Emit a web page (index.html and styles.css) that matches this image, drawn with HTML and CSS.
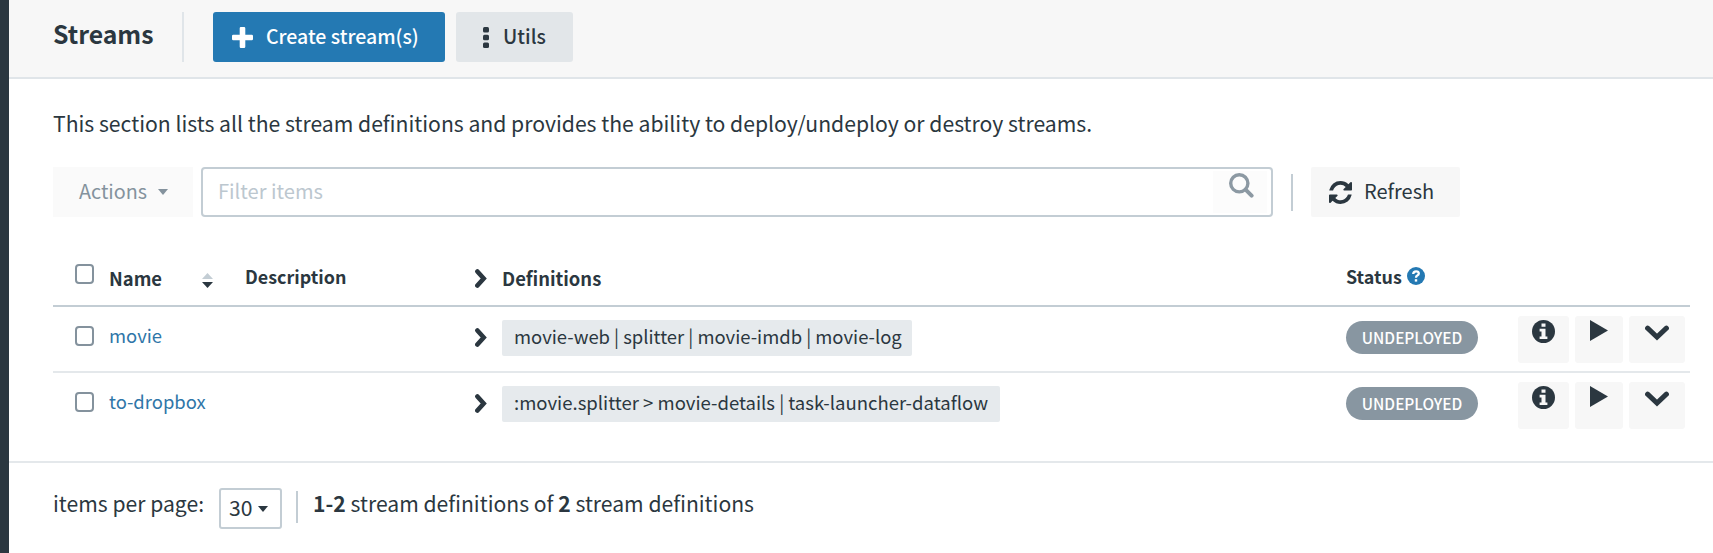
FILE: index.html
```html
<!DOCTYPE html>
<html lang="en">
<head>
<meta charset="utf-8">
<title>Streams</title>
<link rel="stylesheet" href="styles.css">
</head>
<body>
<svg class="defs" width="0" height="0">
  <symbol id="chevron" viewBox="0 0 12 19"><path d="M2.4 2.5 8.700 9.500 2.400 16.500" fill="none" stroke="currentColor" stroke-width="4.600" stroke-linecap="round"/></symbol>
  <symbol id="down" viewBox="0 0 24 16"><path d="M2.600 3.200 12 12 21.400 3.200" fill="none" stroke="currentColor" stroke-width="5" stroke-linecap="round"/></symbol>
  <symbol id="play" viewBox="0 0 18 21"><path d="M0 0 18 10.5 0 21Z" fill="currentColor"/></symbol>
  <symbol id="info" viewBox="0 0 23 23"><circle cx="11.5" cy="11.5" r="11.5" fill="currentColor"/><path d="M9.5 3.4h4v3.4h-4zM7.6 8.8h5.9v7.6h1.9v2.6H7.6v-2.6h1.9v-5H7.6z" fill="#f7f7f7"/></symbol>
</svg>
<div class="app">
  <aside class="rail"></aside>
  <main class="main">
    <header class="header">
      <h1 class="title">Streams</h1>
      <button class="btn primary"><svg width="21" height="21" viewBox="0 0 21 21"><path d="M7.7 1.2q0-1.2 1.2-1.2h3.2q1.2 0 1.2 1.2v6.5h6.5q1.2 0 1.2 1.2v3.2q0 1.2-1.2 1.2h-6.5v6.5q0 1.2-1.2 1.2H8.900q-1.200 0-1.200-1.200v-6.500H1.200Q0 13.300 0 12.100V8.900q0-1.200 1.200-1.200h6.500z" fill="#fff"/></svg><span class="label">Create stream(s)</span></button>
      <button class="btn utils"><svg width="6" height="21" viewBox="0 0 6 21"><g fill="#2b3740"><rect width="6" height="5.500" rx="1.500"/><rect y="7.700" width="6" height="5.500" rx="1.500"/><rect y="15.400" width="6" height="5.500" rx="1.500"/></g></svg><span class="label">Utils</span></button>
    </header>
    <section class="content">
      <p class="intro">This section lists all the stream definitions and provides the ability to deploy/undeploy or destroy streams.</p>
      <div class="toolbar">
        <button class="actions"><span class="label">Actions</span><i class="caret"></i></button>
        <div class="search"><span class="label">Filter items</span><span class="search-btn"><svg width="25" height="25" viewBox="0 0 25 25"><circle cx="10.300" cy="10.300" r="8.600" fill="none" stroke="#8c99a3" stroke-width="3.400"/><path d="m16.600 16.600 6 6" stroke="#8c99a3" stroke-width="4" stroke-linecap="round"/></svg></span></div>
        <i class="rule"></i>
        <button class="refresh"><svg width="23" height="23" viewBox="0 0 1536 1536"><path fill="#2b3740" d="M1511 928q0 5-1 7-64 268-268 434.500T764 1536q-146 0-282.500-55T238 1324l-129 129q-19 19-45 19t-45-19-19-45V960q0-26 19-45t45-19h448q26 0 45 19t19 45-19 45l-137 137q71 66 161 102t187 36q134 0 250-65t186-179q11-17 53-117 8-23 30-23h192q13 0 22.500 9.500t9.500 22.500zm25-800v448q0 26-19 45t-45 19h-448q-26 0-45-19t-19-45 19-45l138-138Q969 256 768 256q-134 0-250 65T332 500q-11 17-53 117-8 23-30 23H50q-13 0-22.500-9.500T18 608v-7q65-268 270-434.500T768 0q146 0 284 55.500T1297 212l130-129q19-19 45-19t45 19 19 45z"/></svg><span class="label">Refresh</span></button>
      </div>
      <div class="table">
        <div class="row head">
          <i class="check"></i>
          <span class="name">Name</span>
          <svg class="sort" width="11" height="15" viewBox="0 0 11 15"><path d="M0 6 5.500 0 11 6z" fill="#c3cdd4"/><path d="M0 9h11l-5.500 6z" fill="#2b3740"/></svg>
          <span class="desc">Description</span>
          <svg class="chev" width="12" height="19"><use href="#chevron"/></svg>
          <span class="defn">Definitions</span>
          <span class="status"><span>Status</span><svg width="18" height="18" viewBox="0 0 18 18"><circle cx="9" cy="9" r="9" fill="#2479b3"/><path d="M6.200 7Q6.300 4.300 9.100 4.300q2.700 0 2.700 2.200 0 1.300-1.500 2.100Q9 9.300 9 10.800" fill="none" stroke="#fff" stroke-width="2.300"/><path d="M7.800 12.200h2.400v2.400H7.800z" fill="#fff"/></svg></span>
        </div>
        <div class="row">
          <i class="check"></i>
          <a class="name">movie</a>
          <svg class="chev" width="12" height="19"><use href="#chevron"/></svg>
          <span class="defn"><span class="chip chip-a">movie-web | splitter | movie-imdb | movie-log</span></span>
          <span class="status"><span class="pill">UNDEPLOYED</span></span>
          <span class="tools"><button class="tool info"><svg width="23" height="23"><use href="#info"/></svg></button><button class="tool play"><svg width="18" height="21"><use href="#play"/></svg></button><button class="tool more"><svg width="24" height="16"><use href="#down"/></svg></button></span>
        </div>
        <div class="row last">
          <i class="check"></i>
          <a class="name">to-dropbox</a>
          <svg class="chev" width="12" height="19"><use href="#chevron"/></svg>
          <span class="defn"><span class="chip chip-b">:movie.splitter &gt; movie-details | task-launcher-dataflow</span></span>
          <span class="status"><span class="pill">UNDEPLOYED</span></span>
          <span class="tools"><button class="tool info"><svg width="23" height="23"><use href="#info"/></svg></button><button class="tool play"><svg width="18" height="21"><use href="#play"/></svg></button><button class="tool more"><svg width="24" height="16"><use href="#down"/></svg></button></span>
        </div>
      </div>
    </section>
    <footer class="footer">
      <span class="per">items per page:</span>
      <button class="size"><span class="label">30</span><i class="caret dark"></i></button>
      <i class="rule foot"></i>
      <span class="count"><b>1-2</b> stream definitions of <b>2</b> stream definitions</span>
    </footer>
  </main>
</div>
</body>
</html>
```

FILE: styles.css
```css
* { box-sizing: border-box; }
body {
  margin: 0;
  background: #fff;
  color: #2b3740;
  font: 20px/30px "Noto Sans CJK SC", "Noto Sans", sans-serif;
}
button {
  display: flex;
  align-items: center;
  padding: 0;
  border: 0;
  font: inherit;
  color: inherit;
}
svg, i { display: block; flex: none; }
span, a, b, p { white-space: nowrap; }
.defs { position: absolute; }
.label { padding-bottom: 2px; }
.app { display: flex; height: 553px; overflow: hidden; }
.rail { width: 9px; background: #2b3740; }
.main { flex: 1; display: flex; flex-direction: column; min-width: 0; }

.header {
  display: flex;
  height: 79px;
  padding: 12px 0 0 44px;
  background: #f7f7f7;
  border-bottom: 2px solid #e0e5e9;
}
.title {
  width: 131px;
  height: 50px;
  margin: 0 29px 0 0;
  padding-top: 6px;
  border-right: 2px solid #e0e5e9;
  font-size: 24.8px;
}
.btn { height: 50px; border-radius: 3px; font-size: 19.5px; font-weight: 500; }
.primary { width: 232px; padding-left: 19px; gap: 13px; background: #2479b3; color: #fff; }
.utils { width: 117px; margin-left: 11px; padding-left: 27px; gap: 14px; background: #e2e6e9; }

.content { height: 382px; padding: 29px 23px 0 44px; }
.intro { margin: 0; font-size: 21.17px; }
.toolbar { display: flex; height: 50px; margin-top: 29px; }
.actions { width: 140px; padding-left: 26px; gap: 11px; background: #fafafa; color: #84929d; font-size: 19.8px; }
.caret { border: 5px solid transparent; border-top: 6px solid #84929d; border-bottom: 0; }
.caret.dark { border-top-color: #2b3740; }
.search {
  display: flex;
  align-items: center;
  justify-content: space-between;
  width: 1072px;
  margin-left: 8px;
  padding: 0 4px 0 15px;
  border: 2px solid #c3cdd4;
  border-radius: 4px;
  color: #bcc7cf;
  font-size: 20px;
}
.search .label { font-size: 20.1px; }
.search-btn { width: 54px; height: 42px; padding: 2px 0 0 16px; background: #fcfcfc; }
.rule { width: 2px; height: 37px; margin: 7px 18px 0; background: #c3cdd4; }
.refresh { width: 149px; padding-left: 18px; gap: 12px; background: #f7f7f7; border-radius: 2px; }

.table { margin-top: 31px; }
.row {
  display: grid;
  grid-template-columns: 34px 93px 43px 230px 27px 844px 172px 1fr;
  height: 66px;
  padding-left: 22px;
  align-items: start;
  border-bottom: 2px solid #e4e8eb;
  font-size: 18.45px;
}
.row.last { border-bottom: 0; }
.check { width: 19px; height: 20px; margin-top: 19px; border: 2px solid #84929d; border-radius: 4px; }
.name { grid-column: 2; margin-top: 13px; }
a.name { grid-column: 2 / 4; color: #2f76a8; }
.chev { grid-column: 5; margin-top: 21px; }
.defn { grid-column: 6; margin-top: 12px; }
.status { grid-column: 7; display: flex; align-items: center; gap: 5px; margin-top: 14px; }
.row.head { height: 59px; border-bottom-color: #c3cdd4; font-size: 18.4px; font-weight: 700; }
.row.head + .row { height: 66px; }
.head .check { margin-top: 16px; }
.head .name, .head .defn { margin-top: 15px; }
.head .sort { grid-column: 3; margin-top: 25px; }
.head .desc { grid-column: 4; margin-top: 13px; }
.head .status { margin-top: 13px; }
.head .desc, .head .status { font-size: 17.9px; }
.chip { display: flex; align-items: center; height: 36px; padding: 0 0 4px 12px; background: #e6eaed; border-radius: 2px; margin-top: 1px; }
.chip-a { width: 410px; }
.chip-b { width: 498px; font-size: 18.55px; }
.pill {
  display: flex;
  align-items: center;
  justify-content: center;
  width: 132px;
  height: 33px;
  padding-bottom: 1px;
  border-radius: 17px;
  background: #8896a1;
  color: #fff;
  font-size: 15.4px;
  font-weight: 500;
}
.tools { grid-column: 8; display: flex; gap: 6px; margin-top: 9px; }
.tool { height: 47px; justify-content: center; align-items: flex-start; padding-top: 4px; background: #f7f7f7; border-radius: 3px; }
.info { width: 51px; }
.play { width: 48px; }
.more { width: 56px; padding-top: 9px; }

.footer {
  display: flex;
  height: 92px;
  padding: 25px 0 0 44px;
  border-top: 2px solid #e4e8eb;
  font-size: 21.15px;
}
.per { width: 166px; }
.size { width: 63px; height: 41px; padding-left: 8px; gap: 6px; border: 2px solid #c3cdd4; border-radius: 3px; background: #fff; }
.size .label { padding-bottom: 4px; }
.rule.foot { height: 32px; margin: 3px 15px 0 14px; }
```
